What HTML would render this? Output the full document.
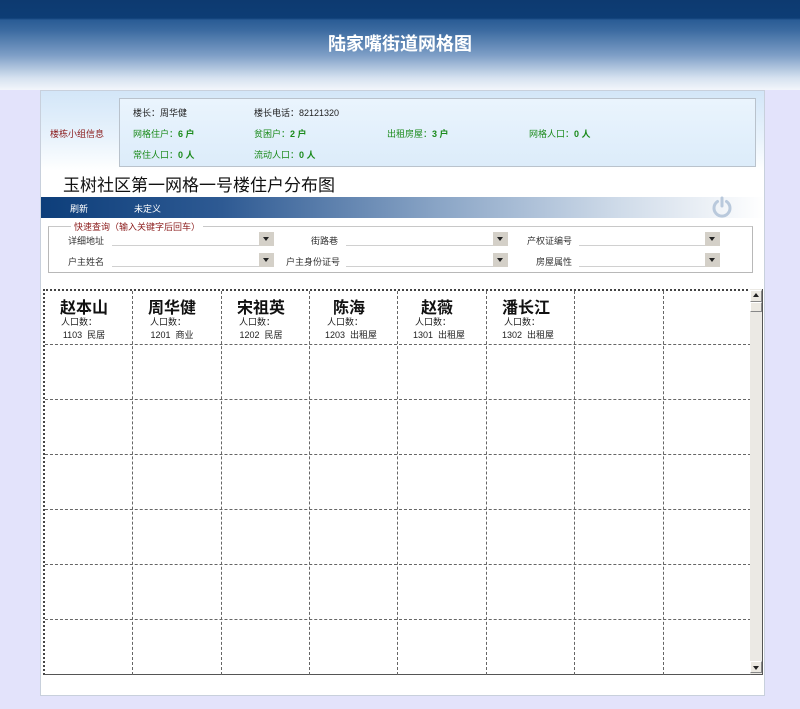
<!DOCTYPE html>
<html><head><meta charset="utf-8"><style>
*{margin:0;padding:0;box-sizing:border-box}
body{width:800px;height:709px;background:#e3e3fb;font-family:"Liberation Sans","Noto Sans CJK SC",sans-serif;position:relative;overflow:hidden}
.a{position:absolute;white-space:nowrap}
#hdr{left:0;top:0;width:800px;height:90px;background:linear-gradient(#0d3a70 0,#0d3d75 18px,#2a5c95 20px,#3b6aa0 30px,#7d9ec6 55px,#d6e2f0 78px,#f3f6fb 90px)}
#hdr .t{left:0;width:800px;top:30px;text-align:center;color:#fff;font-size:18px;font-weight:bold}
#panel{left:40px;top:90px;width:725px;height:606px;background:#fff;border:1px solid #c8d0dc}
#top{left:41px;top:91px;width:723px;height:80px;background:linear-gradient(#d3e6f8,#e9f3fc 60%,#fff)}
#info{left:119px;top:98px;width:637px;height:69px;border:1px solid #b9c2cc;background:linear-gradient(#eaf4fd,#dcecfa)}
.s{font-size:9px;color:#222}
.g{font-size:9px;color:#1a8a1a}
.g b{font-weight:bold}
#tb{left:41px;top:197px;width:723px;height:21px;background:linear-gradient(90deg,#0d3e7a 0,#2e5a93 25%,#8aa5c6 55%,#cfdbe9 80%,#fff 100%)}
.w{color:#fff;font-size:9px}
#fs{left:48px;top:226px;width:705px;height:47px;border:1px solid #b8b8b8;border-top-color:#c8c8c8}
.lg{font-size:9px;color:#8a1a1a;background:#fff;padding:0 3px}
.l{font-size:9px;color:#333}
.cb{height:14px;border-bottom:1px solid #d0d0d0;background:#fff}
.cb i{position:absolute;right:0;top:0;width:15px;height:14px;background:#d4d0c8}
.cb i:after{content:"";position:absolute;left:4px;top:5px;border:3.5px solid transparent;border-top:4px solid #222}
#grid{left:43px;top:289px;width:720px;height:386px;border:1px solid #555;border-top:2px dotted #444;border-left:2px dotted #444}
.v{position:absolute;top:0;width:0;height:384px;border-left:1px dashed #666}
.h{position:absolute;left:0;width:706px;height:0;border-top:1px dashed #666}
.n{font-size:16px;font-weight:bold;color:#111;text-align:center;width:88px}
.p{font-size:9px;color:#222;text-align:center;width:88px}
#sb{left:750px;top:289px;width:12px;height:385px;background:#ebe9e4}
</style></head><body>
<div class="a" id="hdr"><div class="a t">陆家嘴街道网格图</div></div>
<div class="a" id="panel"></div>
<div class="a" id="top"></div>
<div class="a" style="left:50px;top:127px;font-size:9px;color:#8a1a1a">楼栋小组信息</div>
<div class="a" id="info"></div>
<div class="a s" style="left:133px;top:106px">楼长：周华健</div>
<div class="a s" style="left:254px;top:106px">楼长电话：82121320</div>
<div class="a g" style="left:133px;top:127px">网格住户：<b>6 户</b></div>
<div class="a g" style="left:254px;top:127px">贫困户：<b>2 户</b></div>
<div class="a g" style="left:387px;top:127px">出租房屋：<b>3 户</b></div>
<div class="a g" style="left:529px;top:127px">网格人口：<b>0 人</b></div>
<div class="a g" style="left:133px;top:148px">常住人口：<b>0 人</b></div>
<div class="a g" style="left:254px;top:148px">流动人口：<b>0 人</b></div>
<div class="a" style="left:63px;top:171px;font-size:17px;color:#111">玉树社区第一网格一号楼住户分布图</div>
<div class="a" id="tb"></div>
<div class="a w" style="left:70px;top:202px">刷新</div>
<div class="a w" style="left:134px;top:202px">未定义</div>
<svg class="a" style="left:710px;top:195px" width="24" height="24" viewBox="0 0 24 24"><path d="M7.5 6.5A8 8 0 1 0 16.5 6.5" fill="none" stroke="#b9c9dc" stroke-width="3" stroke-linecap="round"/><line x1="12" y1="3" x2="12" y2="11" stroke="#b9c9dc" stroke-width="3" stroke-linecap="round"/></svg>
<div class="a" id="fs"></div>
<div class="a lg" style="left:71px;top:220px">快速查询（输入关键字后回车）</div>
<div class="a l" style="left:68px;top:234px">详细地址</div>
<div class="a l" style="left:68px;top:255px">户主姓名</div>
<div class="a l" style="left:311px;top:234px">街路巷</div>
<div class="a l" style="left:286px;top:255px">户主身份证号</div>
<div class="a l" style="left:527px;top:234px">产权证编号</div>
<div class="a l" style="left:536px;top:255px">房屋属性</div>
<div class="a cb" style="left:112px;top:232px;width:162px"><i></i></div>
<div class="a cb" style="left:112px;top:253px;width:162px"><i></i></div>
<div class="a cb" style="left:346px;top:232px;width:162px"><i></i></div>
<div class="a cb" style="left:346px;top:253px;width:162px"><i></i></div>
<div class="a cb" style="left:579px;top:232px;width:141px"><i></i></div>
<div class="a cb" style="left:579px;top:253px;width:141px"><i></i></div>
<div class="a" id="grid">
<div class="v" style="left:87px"></div><div class="v" style="left:176px"></div><div class="v" style="left:264px"></div><div class="v" style="left:352px"></div><div class="v" style="left:441px"></div><div class="v" style="left:529px"></div><div class="v" style="left:618px"></div><div class="v" style="left:705px"></div>
<div class="h" style="top:53px"></div><div class="h" style="top:108px"></div><div class="h" style="top:163px"></div><div class="h" style="top:218px"></div><div class="h" style="top:273px"></div><div class="h" style="top:328px"></div>
</div>
<div class="a n" style="left:40px;top:294px">赵本山</div><div class="a p" style="left:35px;top:315px">人口数：</div><div class="a p" style="left:40px;top:328px">1103&nbsp; 民居</div>
<div class="a n" style="left:128px;top:294px">周华健</div><div class="a p" style="left:124px;top:315px">人口数：</div><div class="a p" style="left:128px;top:328px">1201&nbsp; 商业</div>
<div class="a n" style="left:217px;top:294px">宋祖英</div><div class="a p" style="left:213px;top:315px">人口数：</div><div class="a p" style="left:217px;top:328px">1202&nbsp; 民居</div>
<div class="a n" style="left:305px;top:294px">陈海</div><div class="a p" style="left:301px;top:315px">人口数：</div><div class="a p" style="left:307px;top:328px">1203&nbsp; 出租屋</div>
<div class="a n" style="left:393px;top:294px">赵薇</div><div class="a p" style="left:389px;top:315px">人口数：</div><div class="a p" style="left:395px;top:328px">1301&nbsp; 出租屋</div>
<div class="a n" style="left:482px;top:294px">潘长江</div><div class="a p" style="left:478px;top:315px">人口数：</div><div class="a p" style="left:484px;top:328px">1302&nbsp; 出租屋</div>
<div class="a" id="sb"></div>
<div class="a" style="left:750px;top:290px;width:12px;height:12px;background:#ece9e2;border:1px solid #fff;border-right-color:#888;border-bottom-color:#888"></div>
<div class="a" style="left:753px;top:293px;border:3px solid transparent;border-bottom:4px solid #222;border-top:0"></div>
<div class="a" style="left:750px;top:302px;width:12px;height:10px;background:#ece9e2;border:1px solid #fff;border-right-color:#888;border-bottom-color:#888"></div>
<div class="a" style="left:750px;top:661px;width:12px;height:12px;background:#ece9e2;border:1px solid #fff;border-right-color:#888;border-bottom-color:#888"></div>
<div class="a" style="left:753px;top:666px;border:3px solid transparent;border-top:4px solid #222;border-bottom:0"></div>
</body></html>
